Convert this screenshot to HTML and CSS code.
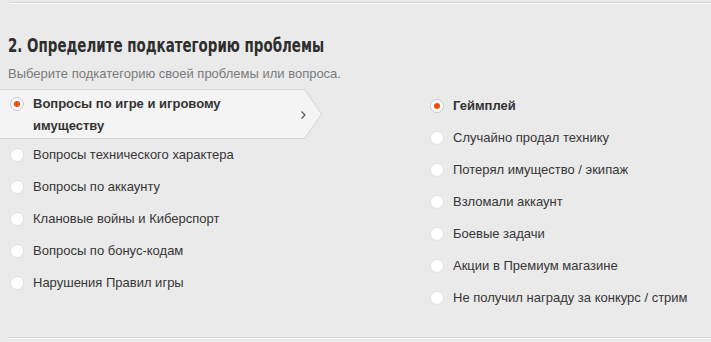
FILE: index.html
```html
<!DOCTYPE html>
<html lang="ru">
<head>
<meta charset="utf-8">
<link rel="stylesheet" href="styles.css">
</head>
<body>
<div class="page">
  <h1 class="title"><span class="title-text">2. Определите подкатегорию проблемы</span></h1>
  <p class="sub">Выберите подкатегорию своей проблемы или вопроса.</p>
  <div class="cols">
    <div class="col-left">
      <div class="sel">
        <div class="sel-inner">
          <span class="radio on"></span>
          <span class="label bold">Вопросы по игре и игровому<br>имуществу</span>
          <svg class="chev" width="5" height="8" viewBox="0 0 5 8"><polyline points="0.5,0.5 4,4 0.5,7.5" fill="none" stroke="#555" stroke-width="1.2"/></svg>
        </div>
      </div>
      <div class="item"><span class="radio"></span><span class="label">Вопросы технического характера</span></div>
      <div class="item"><span class="radio"></span><span class="label">Вопросы по аккаунту</span></div>
      <div class="item"><span class="radio"></span><span class="label">Клановые войны и Киберспорт</span></div>
      <div class="item"><span class="radio"></span><span class="label">Вопросы по бонус-кодам</span></div>
      <div class="item"><span class="radio"></span><span class="label">Нарушения Правил игры</span></div>
    </div>
    <div class="col-right">
      <div class="item first"><span class="radio on"></span><span class="label bold">Геймплей</span></div>
      <div class="item"><span class="radio"></span><span class="label">Случайно продал технику</span></div>
      <div class="item"><span class="radio"></span><span class="label">Потерял имущество / экипаж</span></div>
      <div class="item"><span class="radio"></span><span class="label">Взломали аккаунт</span></div>
      <div class="item"><span class="radio"></span><span class="label">Боевые задачи</span></div>
      <div class="item"><span class="radio"></span><span class="label">Акции в Премиум магазине</span></div>
      <div class="item"><span class="radio"></span><span class="label">Не получил награду за конкурс / стрим</span></div>
    </div>
  </div>
</div>
</body>
</html>
```

FILE: styles.css
```css
html, body {
  margin: 0;
  height: 100%;
}
body {
  background-color: #eaeaea;
  background-image:
    linear-gradient(#d2d2d2, #d2d2d2),
    linear-gradient(#ffffff, #ffffff),
    linear-gradient(#d2d2d2, #d2d2d2),
    linear-gradient(#ffffff, #ffffff);
  background-size: 100% 1px;
  background-repeat: no-repeat;
  background-position: 9px 2px, 9px 3px, 9px 337px, 9px 338px;
  font-family: "Liberation Sans", Arial, sans-serif;
  color: #383838;
  overflow: hidden;
}
.page {
  padding-top: 34px;
}
.title {
  margin: 0 0 0 8px;
  font-family: "DejaVu Sans Condensed", "DejaVu Sans", sans-serif;
  font-weight: bold;
  font-size: 19px;
  line-height: 22px;
  color: #2e2e2e;
  white-space: nowrap;
}
.title-text {
  display: inline-block;
  transform: scaleX(0.785);
  transform-origin: 0 50%;
}
.sub {
  margin: 10px 0 0 8px;
  font-size: 13px;
  line-height: 16px;
  color: #7a7a7a;
}
.cols {
  display: flex;
  margin-top: 7px;
}
.col-left {
  width: 322px;
  display: flex;
  flex-direction: column;
}
.col-right {
  margin-left: 98px;
  display: flex;
  flex-direction: column;
}
.sel {
  width: 322px;
  height: 50px;
  box-sizing: border-box;
  padding: 1px 1px 1px 0;
  background: #d6d6d6;
  clip-path: polygon(0 0, calc(100% - 17px) 0, 100% 50%, calc(100% - 17px) 100%, 0 100%);
}
.sel-inner {
  height: 100%;
  display: flex;
  align-items: flex-start;
  padding: 3px 0 0 10px;
  box-sizing: border-box;
  background: #f4f4f4;
  clip-path: polygon(0 0, calc(100% - 16.5px) 0, 100% 50%, calc(100% - 16.5px) 100%, 0 100%);
}
.sel-inner .label {
  line-height: 22px;
}
.sel-inner .radio {
  margin-top: 4px;
}
.chev {
  margin-left: auto;
  margin-right: 15px;
  margin-top: 18px;
}
.item {
  height: 32px;
  display: flex;
  align-items: center;
  padding-left: 10px;
}
.item.first {
  height: 33px;
}
.radio {
  flex: none;
  width: 14px;
  height: 14px;
  box-sizing: border-box;
  border-radius: 50%;
  background: #ffffff;
  border: 1px solid #e0e0e0;
  margin-right: 9px;
  display: flex;
  align-items: center;
  justify-content: center;
}
.radio.on {
  border-color: #c9c9c9;
}
.radio.on::after {
  content: "";
  width: 6px;
  height: 6px;
  border-radius: 50%;
  background: #ee4d0c;
}
.label {
  font-size: 13px;
  line-height: 18px;
  color: #363636;
}
.bold {
  font-weight: bold;
  color: #333333;
}
```
